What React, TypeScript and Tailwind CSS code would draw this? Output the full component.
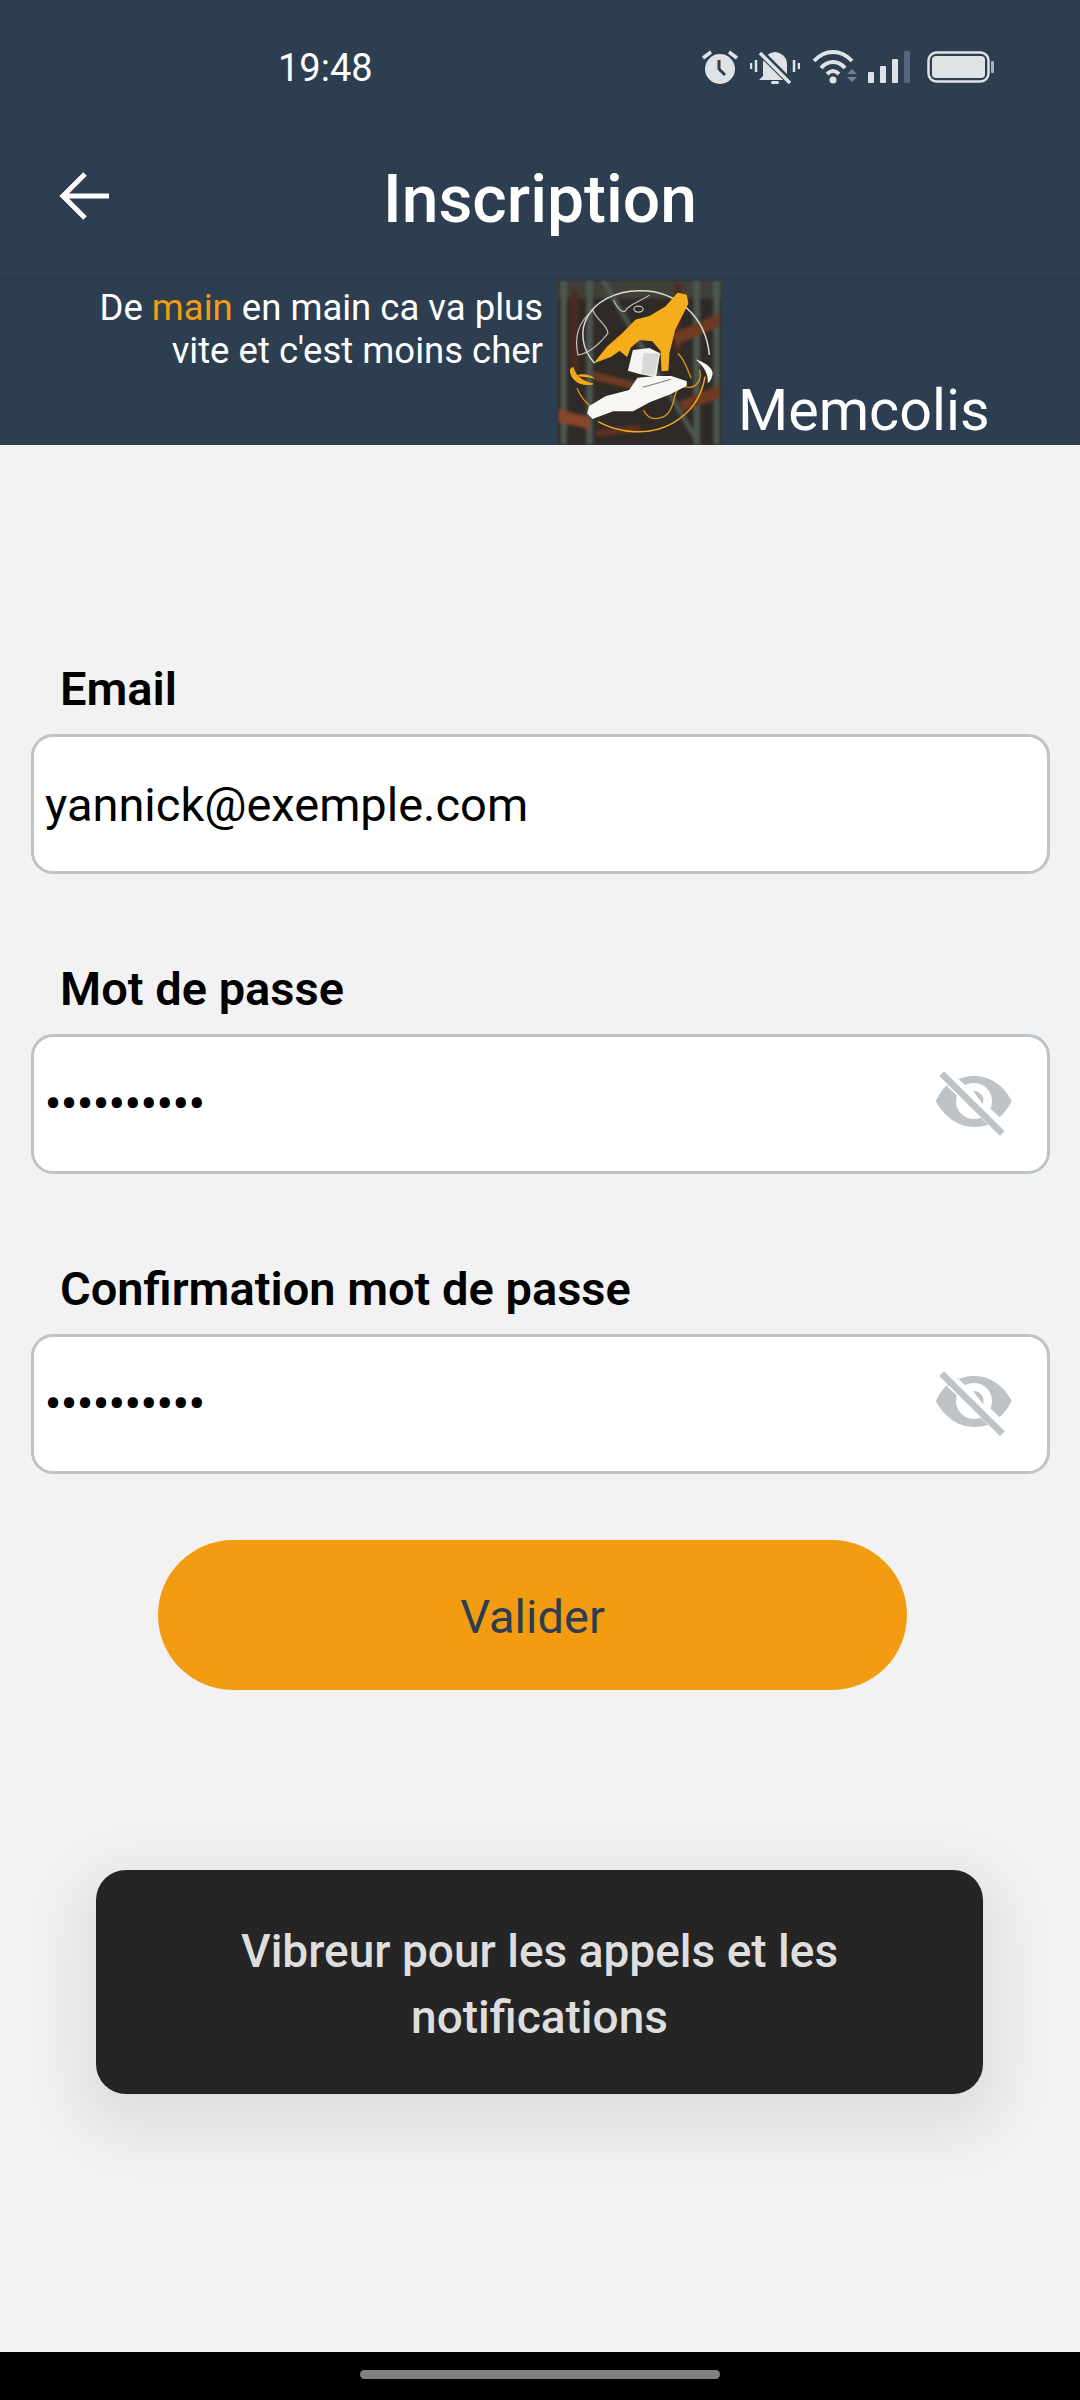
import React from "react";

const F = { fontFamily: "Roboto, sans-serif" };

function EyeOff() {
  return (
    <svg width="80" height="66" viewBox="105 70 240 198" className="shrink-0">
      <path d="M110 160 C135 115 175 85 225 85 C275 85 315 115 338 160 C325 185 315 197 302 209 L176 92 L140 116 C125 130 118 145 110 160 Z" fill="#bdc3c7" />
      <path d="M110 160 C120 142 130 128 143 115 L268 232 C254 236 240 238 225 238 C175 238 135 205 110 160 Z" fill="#bdc3c7" />
      <circle cx="225" cy="160" r="54" fill="#fff" />
      <path d="M222 130 C243 128 258 148 252 170 Z" fill="#bdc3c7" />
      <path d="M160 92 L290 222" stroke="#fff" strokeWidth="18" />
      <path d="M128 78 L310 258" stroke="#bdc3c7" strokeWidth="20" />
    </svg>
  );
}

function Logo() {
  return (
    <svg width="164" height="165" viewBox="55 30 493 495" className="shrink-0">
      <defs>
        <filter id="b1" x="-5%" y="-5%" width="110%" height="110%">
          <feGaussianBlur stdDeviation="5" />
        </filter>
        <filter id="b2" x="-5%" y="-5%" width="110%" height="110%">
          <feGaussianBlur stdDeviation="1.5" />
        </filter>
        <clipPath id="c1">
          <rect x="55" y="30" width="493" height="495" />
        </clipPath>
      </defs>
      <g clipPath="url(#c1)">
        <rect x="55" y="30" width="493" height="495" fill="#2f2a25" />
        <g filter="url(#b1)">
          <rect x="55" y="30" width="493" height="55" fill="#403f39" />
          <path d="M72 30 V525 M150 30 V525 M472 30 V525 M532 30 V525" stroke="#4c5650" strokeWidth="20" />
          <path d="M105 60 V300 M415 40 V240" stroke="#4d2a20" strokeWidth="22" />
          <path d="M190 30 L480 525" stroke="#4d5650" strokeWidth="14" />
          <path d="M400 190 L540 130 V170 L410 225 Z M420 395 L540 345 V385 L430 425 Z M160 305 L300 340 V362 L170 332 Z" fill="#6e3a24" />
          <path d="M55 418 L150 442 V478 L55 456 Z" fill="#8a4526" />
          <path d="M170 482 L300 465 V485 L170 502 Z" fill="#5e3220" />
        </g>
        <g filter="url(#b2)">
          <path d="M165 280 C85 190 145 65 300 62 C410 60 500 140 510 255" fill="none" stroke="#dcdcd8" strokeWidth="4.5" />
          <path d="M115 255 C105 210 110 160 160 120 C170 150 205 165 205 190 C185 215 150 250 115 255 Z M222 90 C235 120 255 135 262 115 C285 95 300 95 330 75" fill="none" stroke="#c4c4c0" strokeWidth="3.5" />
          <ellipse cx="297" cy="117" rx="14" ry="9" fill="none" stroke="#c4c4c0" strokeWidth="3.5" />
          <path d="M175 455 C240 490 330 500 400 460 C450 430 485 390 497 320" fill="none" stroke="#f3a81e" strokeWidth="4.5" />
          <path d="M112 355 C125 385 140 400 155 410 M312 420 C330 460 380 450 395 415 C410 385 400 355 435 350 C470 360 490 330 480 300 M415 250 C435 265 445 300 455 325" fill="none" stroke="#d9951c" strokeWidth="4" />
          <path d="M92 298 C92 330 120 350 160 342 C135 335 110 325 100 292 Z M110 318 C130 310 150 315 165 325" fill="#f3a81e" stroke="#f3a81e" strokeWidth="3" />
          <path d="M440 75 L415 70 L380 110 L330 140 L290 150 L250 190 L205 230 L168 276 L215 258 L240 240 L262 258 L272 232 L300 208 L340 212 L365 242 L368 302 L385 300 L388 250 L405 180 L445 100 Z" fill="#f5ad1f" stroke="#f5ad1f" strokeWidth="4" strokeLinejoin="round" />
          <path d="M265 302 L280 240 L330 234 L362 250 L350 322 L300 312 Z" fill="#f4f4f2" />
          <path d="M312 250 L360 250 L345 318 L306 310 Z" fill="#d8d8d6" />
          <path d="M145 430 L150 410 L200 380 L270 362 L295 325 L350 320 L395 320 L440 335 L440 346 L390 372 L330 395 L280 422 L220 422 L160 445 Z" fill="#f7f7f5" stroke="#f7f7f5" strokeWidth="4" strokeLinejoin="round" />
          <path d="M310 352 L395 328" stroke="#8a7d78" strokeWidth="3.5" />
          <path d="M468 268 C490 275 518 290 520 310 C518 325 512 335 505 340 C508 315 495 290 468 268 Z" fill="#f7f7f5" />
        </g>
      </g>
    </svg>
  );
}

function Field({ label, pass, value }: { label: string; pass?: boolean; value?: string }) {
  return (
    <div className="flex flex-col mb-[60px]">
      <div className="h-[100px] pl-[60px] pt-[27px] text-[47px] leading-[56px] font-semibold text-black">{label}</div>
      <div className="ml-[31px] mr-[30px] h-[140px] rounded-[22px] border-[3px] border-[#bdc3c7] bg-white flex items-center justify-between pl-[11px] pr-[33px]">
        {pass ? (
          <span className="text-[44px] leading-none tracking-[0.15px] text-black font-bold">••••••••••</span>
        ) : (
          <span className="text-[47px] leading-none text-black">{value}</span>
        )}
        {pass && <EyeOff />}
      </div>
    </div>
  );
}

export default function App() {
  return (
    <div className="relative w-[1080px] h-[2400px] overflow-hidden bg-[#f2f2f2] flex flex-col" style={F}>
      <div className="h-[280px] bg-[#2c3e50] border-b border-[#283848] flex flex-col shrink-0">
        <div className="h-[134px] flex items-center pl-[278px] shrink-0">
          <span className="text-[38px] leading-none text-white w-[422px] pt-[2px]">19:48</span>
          <div className="flex items-center">
            <svg width="40" height="36" viewBox="0 0 40 36" className="mr-[10px]">
              <circle cx="20" cy="20" r="15" fill="#dfe3e6" />
              <path d="M19 11 V20 L25 26" stroke="#2c3e50" strokeWidth="3" fill="none" />
              <path d="M3 9 L11 3 M37 9 L29 3" stroke="#dfe3e6" strokeWidth="3.5" />
            </svg>
            <svg width="50" height="36" viewBox="0 0 50 36" className="mr-[12px]">
              <path d="M13 27 L13 15 C13 8 18 4 25 3 C32 4 37 8 37 15 L37 27 L41 31 H9 Z" fill="#dfe3e6" />
              <rect x="21" y="32" width="8" height="3" rx="1.5" fill="#dfe3e6" />
              <path d="M1 14 V20 M6 11 V23 M44 11 V23 M49 14 V20" stroke="#dfe3e6" strokeWidth="2.5" />
              <path d="M8 1 L42 35" stroke="#2c3e50" strokeWidth="7" />
              <path d="M10 4 L40 34" stroke="#dfe3e6" strokeWidth="3.5" />
            </svg>
            <svg width="47" height="36" viewBox="0 0 47 36" className="mr-[8px]">
              <path d="M2 12 C13 0 29 0 40 12 M9 19 C16 11 26 11 33 19 M15 25 C19 21 23 21 27 25" fill="none" stroke="#dfe3e6" strokeWidth="4" />
              <circle cx="21" cy="31" r="3.5" fill="#dfe3e6" />
              <path d="M40 20 L45 25 H35 Z M35 28 H45 L40 33 Z" fill="#75838f" />
            </svg>
            <svg width="44" height="34" viewBox="0 0 44 34" className="mr-[16px]">
              <rect x="1" y="22" width="6" height="11" rx="1" fill="#dfe3e6" />
              <rect x="13" y="16" width="6" height="17" rx="1" fill="#dfe3e6" />
              <rect x="25" y="9" width="6" height="24" rx="1" fill="#dfe3e6" />
              <rect x="37" y="1" width="6" height="32" rx="1" fill="#55677a" />
            </svg>
            <svg width="68" height="32" viewBox="0 0 68 32">
              <rect x="1.5" y="1.5" width="60" height="29" rx="8" fill="none" stroke="#dfe3e6" strokeWidth="2.5" />
              <rect x="5" y="5" width="53" height="22" rx="4" fill="#dfe3e6" />
              <rect x="64" y="10" width="3" height="12" rx="1" fill="#aab3bb" />
            </svg>
          </div>
        </div>
        <div className="relative flex-1 flex items-center justify-center pb-[14px]">
          <svg width="52" height="50" viewBox="0 0 52 50" className="absolute left-[59px] top-[37px]">
            <path d="M26 3 L4 25 L26 47 M4 25 H50" fill="none" stroke="#fff" strokeWidth="5" />
          </svg>
          <span className="text-[66px] leading-none font-medium text-white">Inscription</span>
        </div>
      </div>
      <div className="h-[165px] bg-[#2c3e50] flex shrink-0">
        <div className="w-[543px] pt-[6px] text-right text-[36.5px] leading-[43px] text-white shrink-0">
          De <span className="text-[#f39c12]">main</span> en main ca va plus
          <br />
          vite et c'est moins cher
        </div>
        <div className="ml-[15px]">
          <Logo />
        </div>
        <div className="self-end pl-[16px] text-[57.5px] leading-[68px] text-white">Memcolis</div>
      </div>
      <div className="pt-[189px] flex flex-col">
        <Field label="Email" value="yannick@exemple.com" />
        <Field label="Mot de passe" pass />
        <Field label="Confirmation mot de passe" pass />
        <div className="mt-[6px] ml-[158px] w-[749px] h-[150px] rounded-full bg-[#f39c12] flex items-center justify-center pt-[5px] text-[47px] text-[#2c3e50]">
          Valider
        </div>
      </div>
      <div className="absolute left-[96px] top-[1870px] w-[887px] h-[224px] rounded-[30px] bg-[#252525] shadow-[0_20px_60px_20px_rgba(0,0,0,0.08)] flex items-center justify-center text-center text-[46px] font-medium leading-[66px] text-[#dedede] pl-[100px] pr-[100px] pt-[3px]">
        Vibreur pour les appels et les notifications
      </div>
      <div className="absolute left-0 bottom-0 w-full h-[48px] bg-black flex justify-center pt-[18px]">
        <div className="w-[360px] h-[9px] rounded-full bg-[#808080]" />
      </div>
    </div>
  );
}
